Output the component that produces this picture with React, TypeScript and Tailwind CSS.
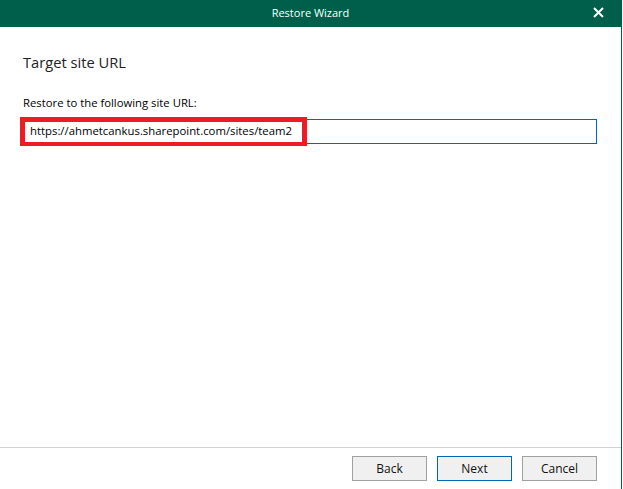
const font = { fontFamily: '"Open Sans", "Noto Sans", sans-serif' };

function Btn({ label, active }: { label: string; active?: boolean }) {
  return (
    <div
      className={`w-[75px] h-[25px] flex items-center justify-center bg-[#f0f0f0] border text-[12px] text-[#111] ${active ? "border-[#0067b0]" : "border-[#a0a0a0]"}`}
    >
      {label}
    </div>
  );
}

export default function App() {
  return (
    <div style={font} className="w-[622px] h-[489px] flex flex-col bg-white border-r border-[#005f4b] overflow-hidden">
      <div className="h-[27px] shrink-0 bg-[#005f4b] relative flex items-center justify-center text-white text-[11px]">
        Restore Wizard
        <svg className="absolute left-[593px] top-[7px]" width="11" height="11" viewBox="0 0 11 11">
          <path d="M1 1 L10 10 M10 1 L1 10" stroke="white" strokeWidth="2" fill="none" />
        </svg>
      </div>
      <div className="flex-1 flex flex-col pl-[23px] pr-[24px]">
        <div className="mt-[24px] h-[22px] leading-[22px] text-[14.7px] text-[#222]">Target site URL</div>
        <div className="mt-[21px] h-[18px] leading-[18px] text-[11.3px] text-black">Restore to the following site URL:</div>
        <div className="relative mt-[7px] h-[25px] border border-[#0067b0] flex items-center pl-[6px] pb-[2px] text-[11.35px] text-black">
          https://ahmetcankus.sharepoint.com/sites/team2
          <div className="absolute left-[-4px] top-[-3px] w-[287px] h-[29px] border-[5px] border-b-4 border-[#ed1c24]" />
        </div>
      </div>
      <div className="shrink-0 h-[42px] border-t border-[#d0d0d0] flex justify-end gap-[10px] pt-[8px] pr-[24px]">
        <Btn label="Back" />
        <Btn label="Next" active />
        <Btn label="Cancel" />
      </div>
    </div>
  );
}
